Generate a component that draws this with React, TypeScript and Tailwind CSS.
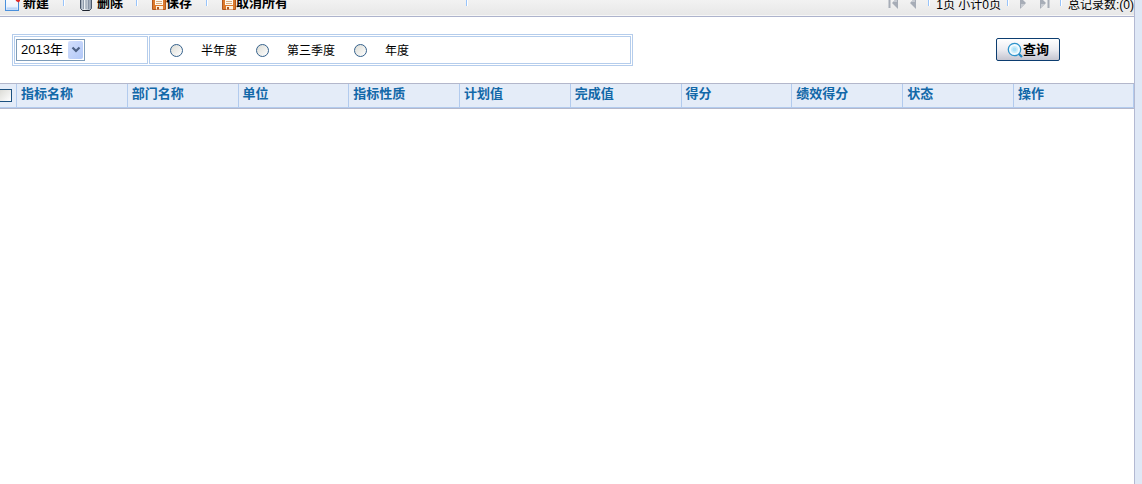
import { useState } from 'react';

const columns = ['指标名称', '部门名称', '单位', '指标性质', '计划值', '完成值', '得分', '绩效得分', '状态', '操作'];
const periods = ['半年度', '第三季度', '年度'];
const years = ['2013年', '2012年', '2011年'];

function Separator() {
  return <span className="h-3.5 w-0.5 shrink-0 self-start border-r border-l border-r-white border-l-[#98c4fb] mt-0.5" />;
}

function NewIcon() {
  return (
    <svg className="h-4 w-4 shrink-0" viewBox="0 0 16 16">
      <defs>
        <linearGradient id="page" x1="0" y1="0" x2="0" y2="1">
          <stop offset="0" stopColor="#ffffff" />
          <stop offset="0.7" stopColor="#eef4fd" />
          <stop offset="1" stopColor="#c3dafa" />
        </linearGradient>
      </defs>
      <rect x="1.5" y="1.5" width="13" height="14" fill="url(#page)" stroke="#4a90dc" />
      <path d="M3 12.500h10v2H3z" fill="#bcd6f8" />
      <path d="M11 3h5v3l-1.500 1.500L12 6z" fill="#e02a2a" />
    </svg>
  );
}

function TrashIcon() {
  return (
    <svg className="h-4 w-3 shrink-0" viewBox="0 0 12 16">
      <defs>
        <linearGradient id="can">
          <stop offset="0" stopColor="#8d9aab" />
          <stop offset="0.35" stopColor="#eef2f6" />
          <stop offset="1" stopColor="#8795a8" />
        </linearGradient>
      </defs>
      <path d="M.5 4h11v9.500l-2 2h-7l-2-2z" fill="url(#can)" stroke="#4b586b" />
      <path d="M3.500 5v9M6 5v9M8.500 5v9" stroke="#7c8a9d" strokeWidth=".8" />
      <path d="M2.500 15.500h7" stroke="#1c222c" />
      <path d="M0 3.500h12M4 1.500h4" stroke="#2b3442" />
    </svg>
  );
}

function SaveIcon() {
  return (
    <svg className="h-4 w-3.5 shrink-0" viewBox="0 0 14 16">
      <path d="M.5 1.500h13v13H.5z" fill="#dc7a2c" stroke="#b0581e" />
      <path d="M3 2h8v2H3z" fill="#fbe3c4" />
      <path d="M3 5h8v5H3z" fill="#fffaf0" />
      <path d="M4 6.500h6M4 8.500h6" stroke="#d9ae82" />
      <path d="M4 11h7v3.500H4z" fill="#fdf1de" />
      <path d="M5 12h2v2.500H5z" fill="#b0581e" />
    </svg>
  );
}

function ArrowIcon({ flip, bar }: { flip?: boolean; bar?: boolean }) {
  return (
    <svg className={`h-3 shrink-0 ${bar ? 'w-2.5' : 'w-1.5'} ${flip ? 'rotate-180' : ''}`} viewBox={bar ? '0 0 10 12' : '0 0 6 12'}>
      <path d="M0 0l6 6-6 6z" fill="#a7adb7" />
      <path d="M1 7h4l-4 4z" fill="#c7cbd2" />
      {bar && <path d="M8.500 1v10" stroke="#a7adb7" strokeWidth="2" />}
    </svg>
  );
}

function SearchIcon() {
  return (
    <svg className="h-4 w-4 shrink-0" viewBox="0 0 16 16">
      <circle cx="7.500" cy="7.500" r="6.200" fill="#f1fafe" stroke="#2c93cb" strokeWidth="1.300" />
      <circle cx="7.500" cy="7.500" r="3.500" fill="#c9ecfa" />
      <circle cx="7.500" cy="7.500" r="2" fill="#a9e0f7" />
      <path d="M12 12l3 3" stroke="#1c86c2" strokeWidth="2.200" />
    </svg>
  );
}

function Toolbar() {
  return (
    <header className="flex h-[17px] items-end overflow-hidden border-b border-[#adb3cc] bg-gradient-to-b from-[#f2f2f2] to-[#e7e7e7]">
      <div className="flex h-[26px] w-full shrink-0 items-center justify-between border-b border-[#f7f7f7] pl-1 text-xs whitespace-nowrap">
        <div className="flex h-full items-center text-[13px] font-bold">
          <button className="flex w-[59px] items-center gap-[3px] pt-px"><NewIcon />新建</button>
          <Separator />
          <button className="flex w-[71px] items-center gap-[5px] pt-px pl-[15px]"><TrashIcon />删除</button>
          <Separator />
          <button className="flex w-[68px] items-center pt-px pl-3.5"><SaveIcon />保存</button>
          <Separator />
          <button className="flex w-[258px] items-center pt-px pl-3.5"><SaveIcon />取消所有</button>
          <Separator />
        </div>
        <div className="flex h-full items-center">
          <button aria-label="首页" className="mr-3"><ArrowIcon flip bar /></button>
          <button aria-label="上一页" className="mr-3"><ArrowIcon flip /></button>
          <Separator />
          <span className="mx-1.5 pt-1">1页 小计0页</span>
          <Separator />
          <button aria-label="下一页" className="mr-3.5 ml-[11px]"><ArrowIcon /></button>
          <button aria-label="末页" className="mr-2.5"><ArrowIcon bar /></button>
          <Separator />
          <span className="ml-1.5 pt-1">总记录数:(0)</span>
        </div>
      </div>
    </header>
  );
}

export default function App() {
  const [year, setYear] = useState('2013年');
  const [period, setPeriod] = useState('');

  return (
    <div className="flex min-h-screen bg-[#dfe8f6] pr-[7px] font-['Liberation_Sans','Noto_Sans_CJK_SC',sans-serif] text-xs text-black">
      <main className="min-w-0 flex-1 overflow-hidden border-r border-[#b3b9d2] bg-white">
        <Toolbar />

        {/* Filters */}
        <form className="flex items-start justify-between pt-[17px] pr-[74px] pb-[17px] pl-3" onSubmit={e => e.preventDefault()}>
          <div className="flex h-8 w-[621px] gap-px border border-[#b5cdec] p-px">
            <div className="flex w-[134px] items-center border border-[#b5cdec] px-px">
              <div className="relative">
                <select
                  aria-label="年份"
                  value={year}
                  onChange={e => setYear(e.target.value)}
                  className="block h-[22px] w-[69px] appearance-none border border-[#7f9db9] bg-white pl-1 text-[13px]"
                >
                  {years.map(y => <option key={y}>{y}</option>)}
                </select>
                <span className="pointer-events-none absolute top-0.5 right-0.5 flex h-[18px] w-[15px] items-center justify-center rounded-xs bg-gradient-to-br from-[#d3dffc] to-[#b2c8f8]">
                  <svg className="h-2 w-2.5" viewBox="0 0 10 8">
                    <path d="M1.500 1.500L5 5l3.500-3.500" fill="none" stroke="#4d6185" strokeWidth="2.200" />
                  </svg>
                </span>
              </div>
            </div>
            <div className="flex flex-1 items-center gap-[19px] border border-[#b5cdec] pl-5">
              {periods.map(p => (
                <label key={p} className="flex items-center gap-[18px]">
                  <input
                    type="radio"
                    name="period"
                    checked={period === p}
                    onChange={() => setPeriod(p)}
                    className="h-[13px] w-[13px] appearance-none rounded-full border border-[#34618c] bg-gradient-to-br from-[#dcdcd5] to-white checked:border-4"
                  />
                  <span className="pt-0.5">{p}</span>
                </label>
              ))}
            </div>
          </div>
          <button className="mt-1 flex h-[23px] w-16 items-center justify-center rounded-xs border border-[#0c3d70] bg-gradient-to-b from-white via-[#ececf1] to-[#c5c5d0] text-[13px] font-bold">
            <SearchIcon />
            查询
          </button>
        </form>

        <table className="w-full table-fixed border-separate border-spacing-0 border-y border-[#b3b7cb] bg-[#e4ecf8]">
          <thead>
            <tr className="h-6 text-left align-top text-[13px] leading-5 text-[#1268a8]">
              <th className="w-[17px] border-r border-b border-[#b2cbee] p-0">
                <input
                  type="checkbox"
                  aria-label="全选"
                  className="mt-[5px] -ml-px block h-[13px] w-[13px] appearance-none border border-[#1c5180] bg-gradient-to-br from-[#dcdcd7] to-white checked:bg-[#1c5180]"
                />
              </th>
              {columns.map(c => (
                <th key={c} className="border-r border-b border-[#b2cbee] py-0 pr-0 pl-1 last:w-[120px]">{c}</th>
              ))}
            </tr>
          </thead>
        </table>
      </main>
    </div>
  );
}
